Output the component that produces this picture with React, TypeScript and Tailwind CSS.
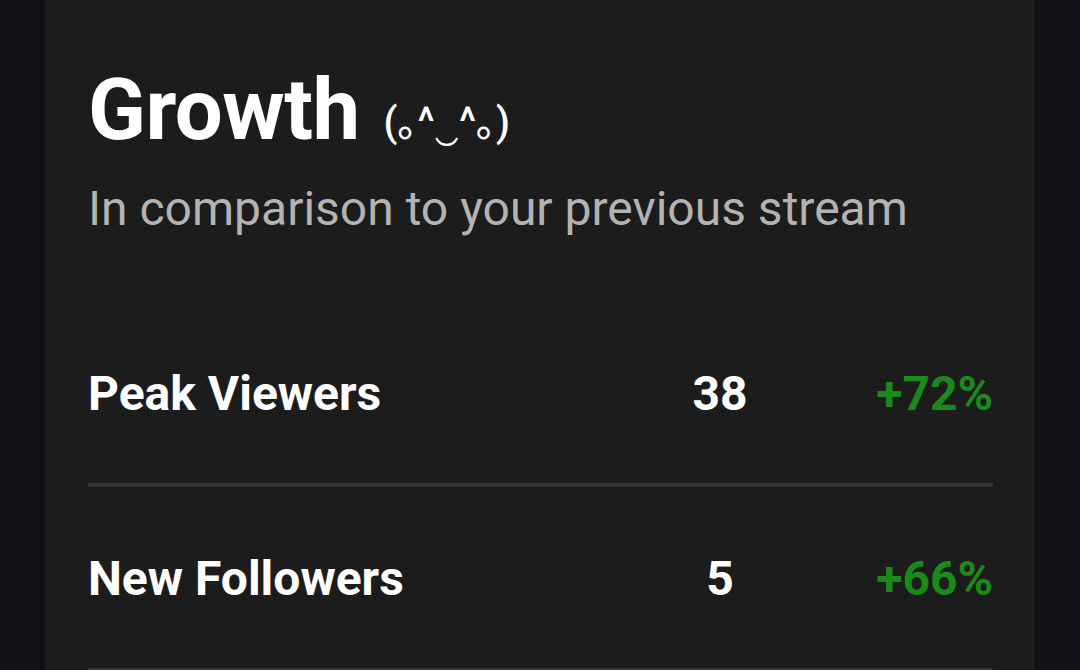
import React from "react";

const stats = [
  { label: "Peak Viewers", value: "38", change: "+72%" },
  { label: "New Followers", value: "5", change: "+66%" },
];

export default function App() {
  return (
    <div
      className="w-[1080px] h-[670px] overflow-hidden bg-[#111217] pl-[45px]"
      style={{ fontFamily: "Roboto, 'Noto Sans', 'Noto Sans CJK JP', sans-serif" }}
    >
      <div className="w-[989px] h-full bg-[#1c1c1c] pl-[43px] pr-[41px] pt-[70px]">
        {/* Header */}
        <div className="flex items-baseline gap-[24px]">
          <h1 className="text-[85px] leading-[80px] font-bold text-white tracking-[-0.5px]">Growth</h1>
          <span className="relative -top-[3px] text-[40px] leading-none text-white font-medium">(｡^‿^｡)</span>
        </div>
        <p className="mt-[32px] text-[48px] leading-[53px] text-[#b3b3b3]">
          In comparison to your previous stream
        </p>

        {/* Stats */}
        <div className="mt-[67px]">
          {stats.map((s) => (
            <div key={s.label}>
              <div className="h-[181px] grid grid-cols-[1fr_120px_213px] items-center pt-[3px]">
                <span className="text-[48px] font-bold text-white">{s.label}</span>
                <span className="text-[48px] font-bold text-white text-center">{s.value}</span>
                <span className="text-[48px] font-bold text-[#1a8a1a] text-right">{s.change}</span>
              </div>
              <div className="h-[4px] bg-[#333333]" />
            </div>
          ))}
        </div>
      </div>
    </div>
  );
}
